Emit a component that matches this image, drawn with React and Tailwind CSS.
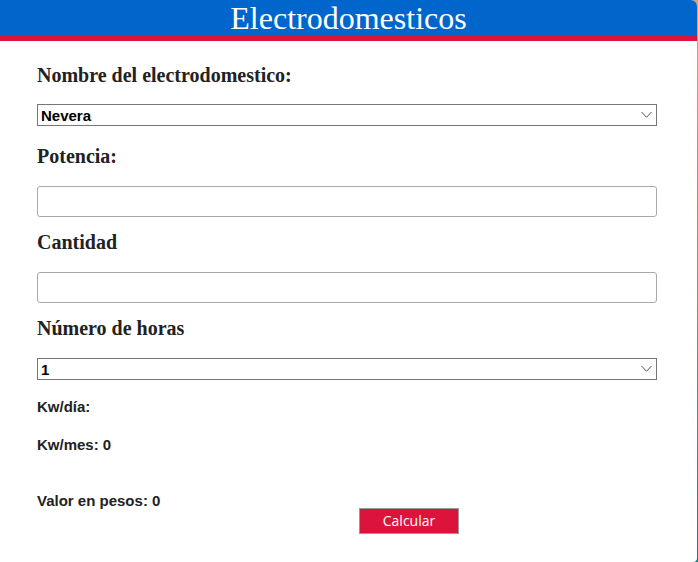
function Chevron() {
  return (
    <svg
      className="pointer-events-none absolute right-[5px] top-1/2 -translate-y-1/2"
      width="11"
      height="7"
      viewBox="0 0 11 7"
      fill="none"
    >
      <path d="M0.5 0.5 L5.5 5.8 L10.5 0.5" stroke="#555" strokeWidth="1" />
    </svg>
  )
}

function Select({ value, options }) {
  return (
    <div className="relative h-[22px] w-[620px]">
      <select
        defaultValue={value}
        className="h-full w-full appearance-none border border-[#767676] bg-white pb-[2px] pl-[3px] text-[15px] font-bold text-black outline-none [font-family:'Liberation_Sans',Arial,sans-serif]"
      >
        {options.map(o => (
          <option key={o}>{o}</option>
        ))}
      </select>
      <Chevron />
    </div>
  )
}

function Label({ children, className }) {
  return (
    <h3
      className={`text-[20px] font-bold leading-[24px] text-[#222] [font-family:'Liberation_Serif','Times_New_Roman',serif] ${className}`}
    >
      {children}
    </h3>
  )
}

export default function App() {
  return (
    <div className="min-h-[562px] w-[698px] bg-gradient-to-b from-[#d9a46c] to-[#167a78]">
      <div className="min-h-[562px] w-[697px] overflow-hidden rounded-tr-[6px] rounded-br-[4px] bg-white">
        <div className="flex h-[35px] items-center justify-center bg-[#0066cc]">
          <h1 className="text-[32px] font-normal leading-none text-white [font-family:'Liberation_Serif','Times_New_Roman',serif]">
            Electrodomesticos
          </h1>
        </div>
        <div className="h-[6px] bg-[#dc143c]" />

        <div className="px-[37px] text-[#222] [font-family:'Liberation_Sans',Arial,sans-serif]">
          <Label className="mt-[22px]">Nombre del electrodomestico:</Label>
          <div className="mt-[17px]">
            <Select value="Nevera" options={['Nevera', 'Lavadora', 'Televisor', 'Microondas']} />
          </div>

          <Label className="mt-[18px]">Potencia:</Label>
          <input
            type="text"
            className="mt-[18px] block h-[31px] w-[620px] rounded-[3px] border border-[#aaa] bg-white outline-none"
          />

          <Label className="mt-[13px]">Cantidad</Label>
          <input
            type="text"
            className="mt-[18px] block h-[31px] w-[620px] rounded-[3px] border border-[#aaa] bg-white outline-none"
          />

          <Label className="mt-[13px]">Número de horas</Label>
          <div className="mt-[18px]">
            <Select value="1" options={['1', '2', '3', '4', '5', '6', '8', '12', '24']} />
          </div>

          <p className="mt-[17px] text-[15px] font-bold leading-[20px]">Kw/día:</p>
          <p className="mt-[18px] text-[15px] font-bold leading-[20px]">Kw/mes: 0</p>

          <div className="mt-[36px] flex items-start">
            <p className="w-[322px] text-[15px] font-bold leading-[20px]">Valor en pesos: 0</p>
            <button className="mt-[17px] h-[26px] w-[100px] border border-[#999] bg-[#dc143c] text-[14px] leading-none text-white [font-family:'Open_Sans',sans-serif]">
              Calcular
            </button>
          </div>
        </div>
      </div>
    </div>
  )
}
